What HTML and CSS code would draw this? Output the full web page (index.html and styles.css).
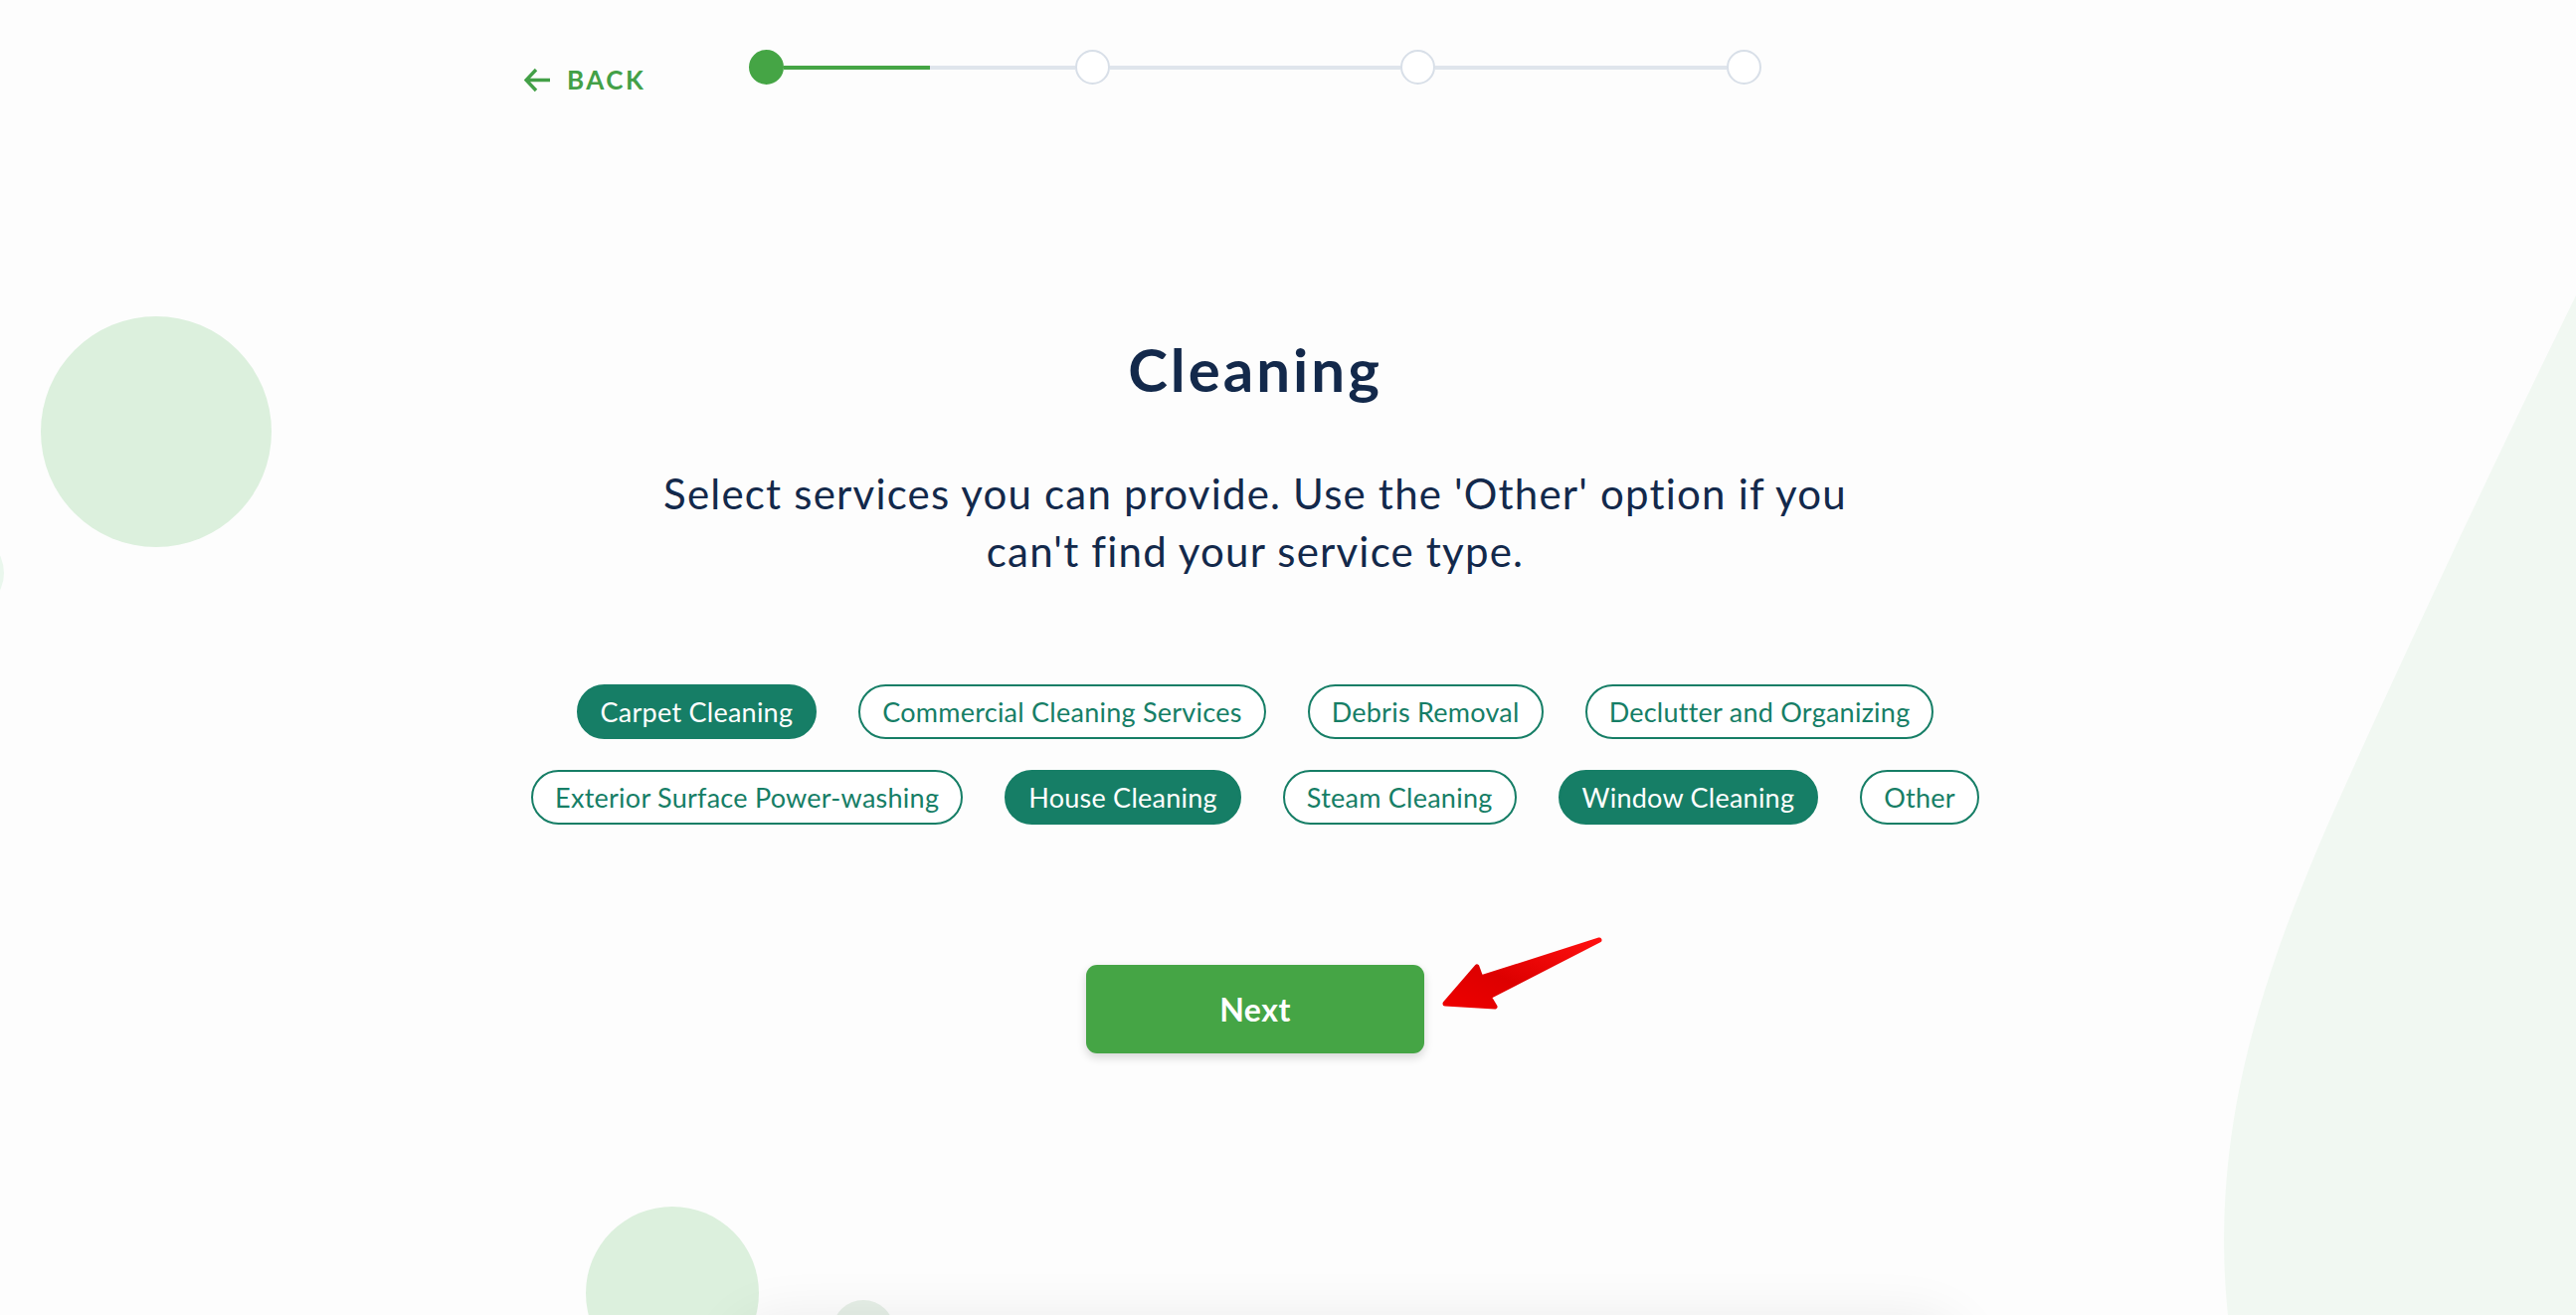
FILE: index.html
```html
<!DOCTYPE html>
<html lang="en">
<head>
  <meta charset="UTF-8" />
  <meta name="viewport" content="width=device-width, initial-scale=1.0" />
  <title>Cleaning services</title>
  <link rel="stylesheet" href="styles.css">
</head>
<body>
  <div class="page">
    <!-- background shapes -->
    <div class="decor">
      <span class="dot dot-left"></span>
      <span class="dot dot-edge"></span>
      <span class="dot dot-bottom"></span>
      <span class="dot dot-small"></span>
      <svg class="blob" viewBox="2200 280 390 1042" width="390" height="1042">
        <path d="M2590 297 C2520 440 2420 650 2340 830 C2280 970 2220 1130 2240 1322 L2590 1322 Z" fill="#f1f8f2" />
      </svg>
    </div>

    <header class="topbar">
      <a class="back" href="#">
        <svg width="27" height="25" viewBox="0 0 27 25">
          <path d="M12 2 L2 12.5 L12 23 M2.5 12.5 H26" fill="none" stroke="#43a047" stroke-width="3.4" />
        </svg>
        <span>BACK</span>
      </a>
      <div class="stepper">
        <span class="step done"></span>
        <span class="track half"></span>
        <span class="step"></span>
        <span class="track"></span>
        <span class="step"></span>
        <span class="track"></span>
        <span class="step"></span>
      </div>
    </header>

    <main class="content">
      <h1>Cleaning</h1>
      <p class="lead">Select services you can provide. Use the 'Other' option if you can't find your service type.</p>

      <div class="chips">
        <button class="chip on">Carpet Cleaning</button>
        <button class="chip">Commercial Cleaning Services</button>
        <button class="chip">Debris Removal</button>
        <button class="chip">Declutter and Organizing</button>
        <button class="chip">Exterior Surface Power-washing</button>
        <button class="chip on">House Cleaning</button>
        <button class="chip">Steam Cleaning</button>
        <button class="chip on">Window Cleaning</button>
        <button class="chip">Other</button>
      </div>

      <div class="actions">
        <div class="next-wrap">
          <button class="next">Next</button>
          <svg class="pointer" width="170" height="80" viewBox="0 0 170 80">
            <defs>
              <linearGradient id="red" x1="1" y1="0" x2="0" y2="1">
                <stop offset="0" stop-color="#ff1010" />
                <stop offset="0.6" stop-color="#dd0000" />
                <stop offset="1" stop-color="#ee0000" />
              </linearGradient>
            </defs>
            <path d="M8 69 L40 32 L44 43 L163 5 L52 62 L58 72 Z" fill="url(#red)" stroke="url(#red)" stroke-width="5" stroke-linejoin="round" />
          </svg>
        </div>
      </div>
    </main>

    <section class="card-peek"></section>
  </div>
</body>
</html>
```

FILE: styles.css
```css
* {
  box-sizing: border-box;
}
body {
  margin: 0;
  font-family: Lato, "Open Sans", sans-serif;
  background-color: #fdfdfd;
  color: #13294b;
  overflow: hidden;
}
.page {
  position: relative;
  height: 100vh;
  overflow: hidden;
  padding-right: 66px;
}

/* decorations */
.decor {
  position: absolute;
  inset: 0;
  z-index: 0;
}
.dot {
  position: absolute;
  border-radius: 50%;
  background-color: #dcf0dd;
}
.dot-left {
  left: 41px;
  top: 318px;
  width: 232px;
  height: 232px;
}
.dot-edge {
  left: -76px;
  top: 536px;
  width: 80px;
  height: 80px;
  background-color: #eaf7ed;
}
.dot-bottom {
  left: 589px;
  top: 1213px;
  width: 174px;
  height: 174px;
}
.dot-small {
  left: 837px;
  top: 1307px;
  width: 62px;
  height: 62px;
  background-color: #e6efe7;
}
.blob {
  position: absolute;
  left: 2200px;
  top: 280px;
}

/* top bar */
.topbar {
  position: relative;
  z-index: 1;
  width: 1470px;
  height: 85px;
  margin: 0 auto;
  padding-top: 50px;
  display: grid;
  grid-template-columns: 1fr auto 1fr;
  align-items: start;
}
.back {
  display: flex;
  align-items: center;
  gap: 16px;
  margin-top: 15px;
  color: #43a047;
  text-decoration: none;
  font-weight: 700;
  font-size: 26px;
  line-height: 30px;
  letter-spacing: 2.5px;
}
.stepper {
  width: 1018px;
  display: flex;
  align-items: center;
}
.step {
  width: 35px;
  height: 35px;
  border-radius: 50%;
  border: 2px solid #d8dfe8;
  background-color: #fff;
  flex: none;
}
.step.done {
  border-color: #45a545;
  background-color: #45a545;
}
.track {
  flex: 1;
  height: 4px;
  background-color: #dfe5ec;
}
.track.half {
  background: linear-gradient(to right, #45a545 50%, #dfe5ec 50%);
}

/* main */
.content {
  position: relative;
  z-index: 1;
  display: flex;
  flex-direction: column;
  align-items: center;
  text-align: center;
}
h1 {
  margin: 251px 0 0;
  font-size: 60px;
  line-height: 70px;
  font-weight: 700;
  letter-spacing: 3px;
  color: #13294b;
}
.lead {
  margin: 61px 0 0;
  max-width: 1230px;
  font-size: 42px;
  line-height: 58px;
  letter-spacing: 1.2px;
  color: #13294b;
}
.chips {
  margin-top: 105px;
  width: 1500px;
  display: flex;
  flex-wrap: wrap;
  justify-content: center;
  gap: 31px 42px;
}
.chip {
  font-family: inherit;
  font-size: 27px;
  line-height: 33px;
  letter-spacing: 0.25px;
  padding: 9px 22px;
  border: 2px solid #167e66;
  border-radius: 30px;
  background-color: #fff;
  color: #167e66;
  cursor: pointer;
}
.chip.on {
  background-color: #167e66;
  color: #fff;
}
.actions {
  margin-top: 141px;
  display: flex;
  justify-content: center;
}
.next-wrap {
  position: relative;
}
.next {
  width: 340px;
  height: 89px;
  border: none;
  border-radius: 11px;
  background-color: #45a545;
  color: #fff;
  font-family: inherit;
  font-weight: 700;
  font-size: 32px;
  letter-spacing: 0.5px;
  box-shadow: 0 4px 10px rgba(0, 0, 0, 0.16);
  cursor: pointer;
}
.pointer {
  position: absolute;
  left: calc(100% + 13px);
  top: -30px;
}

.card-peek {
  position: relative;
  z-index: 0;
  width: 1230px;
  height: 300px;
  margin: 271px 0 0 740px;
  background-color: #fff;
  border-radius: 40px;
  box-shadow: 0 0 60px rgba(0, 0, 0, 0.09);
}
```
